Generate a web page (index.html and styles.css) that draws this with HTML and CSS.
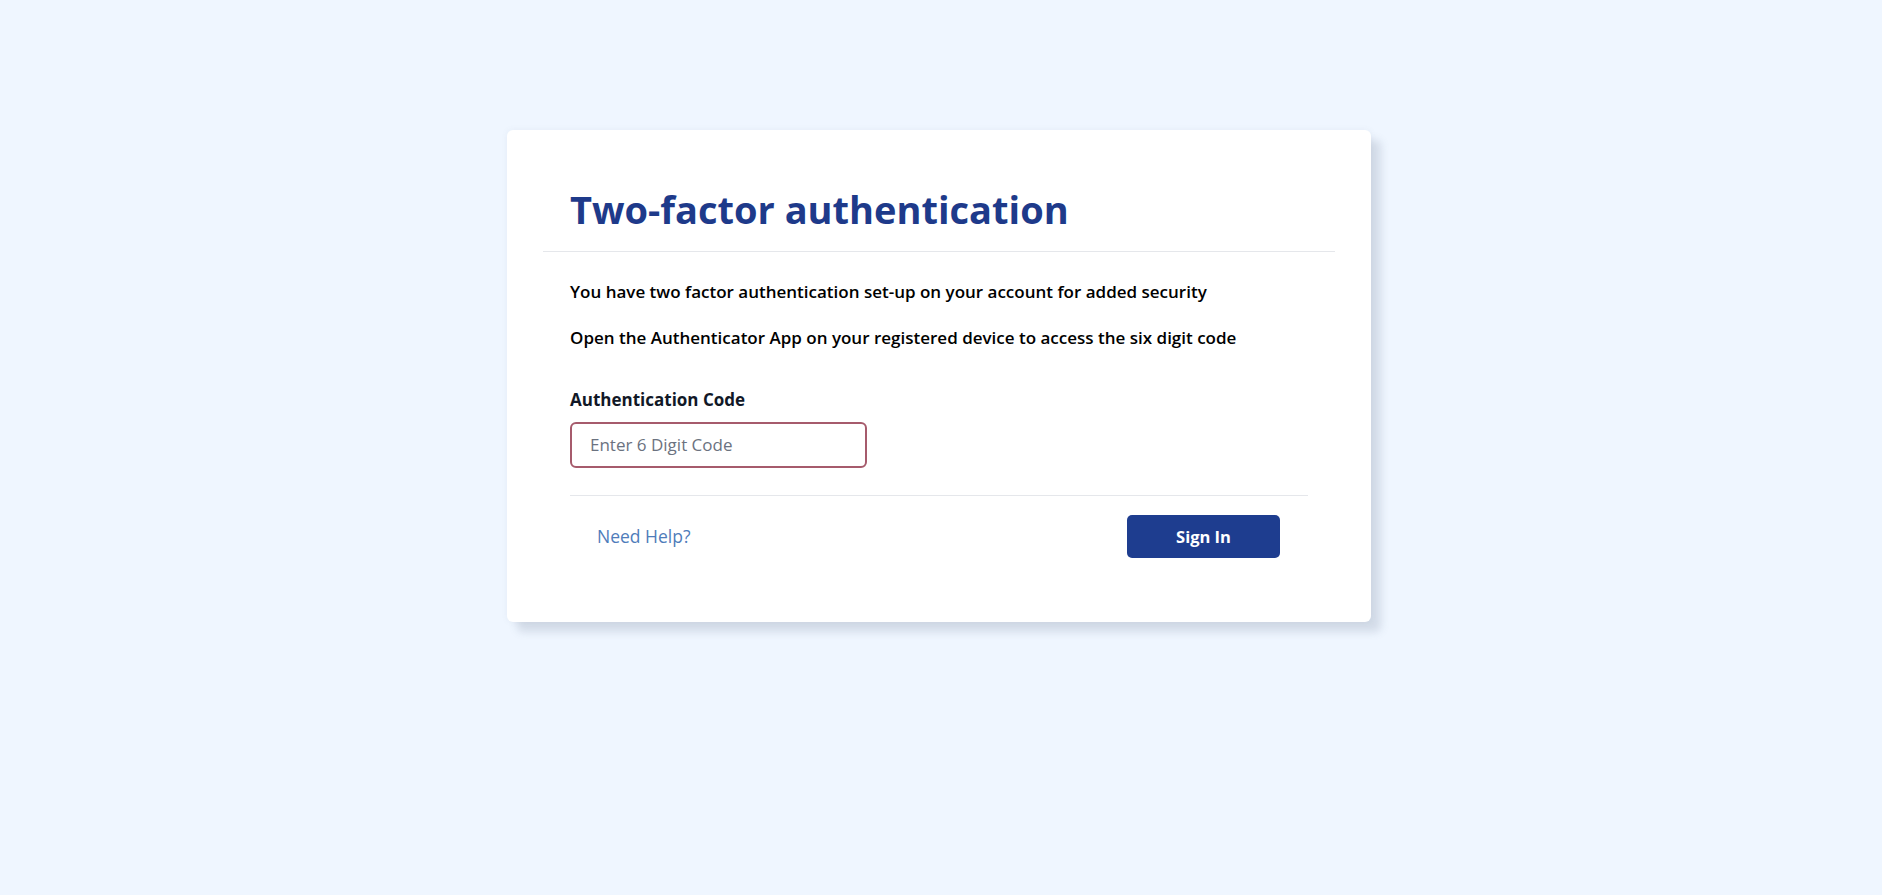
FILE: index.html
```html
<!DOCTYPE html>
<html lang="en">
<head>
<meta charset="utf-8">
<title>Two-factor authentication</title>
<link rel="stylesheet" href="styles.css">
</head>
<body>
<main class="page">
  <section class="card">
    <header class="card-header">
      <h1 class="title">Two-factor authentication</h1>
    </header>
    <div class="card-body">
      <p class="text">You have two factor authentication set-up on your account for added security</p>
      <p class="text text-second">Open the Authenticator App on your registered device to access the six digit code</p>
      <label class="label" for="code">Authentication Code</label>
      <input class="code-input" id="code" type="text" placeholder="Enter 6 Digit Code">
      <div class="card-footer">
        <a class="help-link" href="#">Need Help?</a>
        <button class="btn-primary" type="button">Sign In</button>
      </div>
    </div>
  </section>
</main>
</body>
</html>
```

FILE: styles.css
```css
html, body {
  margin: 0;
  padding: 0;
}

body {
  background: #eff6ff;
  font-family: "Open Sans", "Noto Sans", "Liberation Sans", sans-serif;
  color: #000;
  min-height: 895px;
}

.page {
  display: flex;
  justify-content: center;
  padding: 130px 4px 0 0;
}

.card {
  width: 864px;
  box-sizing: border-box;
  background: #fff;
  border-radius: 6px;
  padding: 36px;
  box-shadow: 10px 10px 8px rgba(100, 116, 139, 0.2), 0 0 6px rgba(100, 116, 139, 0.08);
}

.card-header {
  border-bottom: 1px solid #e5e7eb;
  padding: 0 27px 18px;
}

.title {
  margin: 21px 0 0;
  font-size: 38px;
  line-height: 1.2;
  font-weight: 700;
  color: #1e3a8a;
}

.card-body {
  display: flex;
  flex-direction: column;
  align-items: flex-start;
  padding: 28px 27px 0;
}

.text {
  margin: 0;
  font-size: 17px;
  line-height: 24px;
  font-weight: 600;
  color: #000;
}

.text-second {
  margin-top: 22px;
}

.label {
  margin-top: 38px;
  font-size: 17px;
  line-height: 24px;
  font-weight: 700;
  color: #111827;
}

.code-input {
  margin-top: 10px;
  box-sizing: border-box;
  width: 297px;
  height: 46px;
  border: 2px solid #a65b6c;
  border-radius: 6px;
  padding: 0 16px 0 18px;
  font-family: inherit;
  font-size: 17px;
  color: #111827;
  outline: none;
}

.code-input::placeholder {
  color: #6b7280;
}

.card-footer {
  align-self: stretch;
  margin-top: 27px;
  border-top: 1px solid #e5e7eb;
  padding: 19px 28px 28px 27px;
  display: flex;
  align-items: center;
  justify-content: space-between;
}

.help-link {
  font-size: 17.5px;
  color: #4f7cba;
  text-decoration: none;
}

.btn-primary {
  width: 153px;
  height: 43px;
  border: none;
  border-radius: 5px;
  background: #1e3d8f;
  color: #fff;
  font-family: inherit;
  font-size: 16.5px;
  font-weight: 700;
  cursor: pointer;
}
```
